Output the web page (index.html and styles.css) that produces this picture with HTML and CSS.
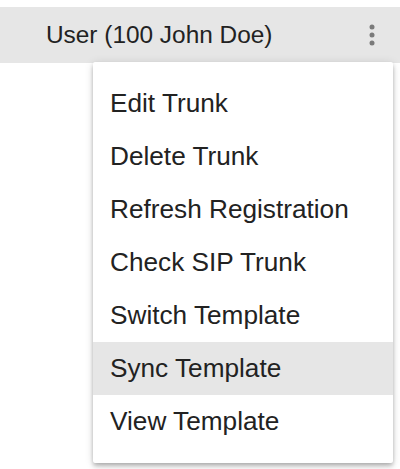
FILE: index.html
```html
<!DOCTYPE html>
<html>
<head>
<meta charset="utf-8">
<link rel="stylesheet" href="styles.css">
</head>
<body>
<div class="page">
  <div class="header">
    <span class="title">User (100 John Doe)</span>
    <span class="more" aria-label="more">
      <svg width="6" height="22" viewBox="0 0 6 22"><circle cx="3" cy="3" r="2.5" fill="#7a7a7a"/><circle cx="3" cy="11" r="2.5" fill="#7a7a7a"/><circle cx="3" cy="19" r="2.5" fill="#7a7a7a"/></svg>
    </span>
  </div>
  <ul class="menu">
    <li class="item">Edit Trunk</li>
    <li class="item">Delete Trunk</li>
    <li class="item">Refresh Registration</li>
    <li class="item">Check SIP Trunk</li>
    <li class="item">Switch Template</li>
    <li class="item active">Sync Template</li>
    <li class="item">View Template</li>
  </ul>
</div>
</body>
</html>
```

FILE: styles.css
```css
html, body {
  margin: 0;
  padding: 0;
  background: #fff;
}
body {
  font-family: "Liberation Sans", Arial, sans-serif;
  color: #212121;
}
.page {
  position: relative;
  padding-top: 7px;
  height: 462px;
}
.header {
  height: 56px;
  background: #e6e6e6;
  display: flex;
  align-items: center;
  padding-left: 46px;
  padding-right: 25px;
}
.title {
  flex: 1;
  font-size: 24.4px;
  line-height: 28px;
  color: #222;
}
.more {
  display: flex;
  align-items: center;
}
.menu {
  position: absolute;
  left: 93px;
  top: 62px;
  width: 300px;
  margin: 0;
  padding: 15px 0 15px;
  list-style: none;
  background: #fff;
  box-shadow: 0 2px 4px -1px rgba(0,0,0,0.2), 0 4px 5px 0 rgba(0,0,0,0.14), 0 1px 10px 0 rgba(0,0,0,0.12);
  border-radius: 2px;
}
.item {
  height: 53px;
  display: flex;
  align-items: center;
  padding-left: 17px;
  font-size: 26.2px;
  color: #222;
}
.active {
  background: #e6e6e6;
}
```
